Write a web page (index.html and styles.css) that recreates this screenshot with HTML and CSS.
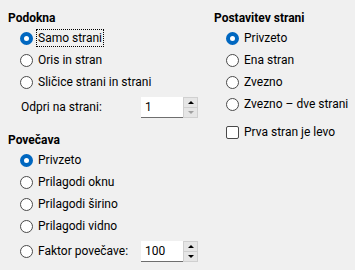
FILE: index.html
```html
<!DOCTYPE html>
<html lang="sl">
<head>
    <meta charset="UTF-8">
    <title>Pogled</title>
    <link rel="stylesheet" href="styles.css">
</head>
<body>
    <div class="options">
        <div class="column left-col">
            <h3>Podokna</h3>
            <div class="row"><span class="radio checked"></span><span class="label focused">Samo strani</span></div>
            <div class="row"><span class="radio"></span><span class="label">Oris in stran</span></div>
            <div class="row"><span class="radio"></span><span class="label">Sličice strani in strani</span></div>
            <div class="row field-row">
                <span class="field-label">Odpri na strani:</span>
                <div class="spin">
                    <span class="spin-value">1</span>
                    <div class="spin-buttons">
                        <span class="spin-btn up"></span>
                        <span class="spin-btn down disabled"></span>
                    </div>
                </div>
            </div>

            <h3 class="section-gap">Povečava</h3>
            <div class="row"><span class="radio checked"></span><span class="label">Privzeto</span></div>
            <div class="row"><span class="radio"></span><span class="label">Prilagodi oknu</span></div>
            <div class="row"><span class="radio"></span><span class="label">Prilagodi širino</span></div>
            <div class="row"><span class="radio"></span><span class="label">Prilagodi vidno</span></div>
            <div class="row field-row">
                <span class="radio"></span><span class="label factor-label">Faktor povečave:</span>
                <div class="spin">
                    <span class="spin-value">100</span>
                    <div class="spin-buttons">
                        <span class="spin-btn up"></span>
                        <span class="spin-btn down"></span>
                    </div>
                </div>
            </div>
        </div>

        <div class="column right-col">
            <h3>Postavitev strani</h3>
            <div class="row"><span class="radio checked"></span><span class="label">Privzeto</span></div>
            <div class="row"><span class="radio"></span><span class="label">Ena stran</span></div>
            <div class="row"><span class="radio"></span><span class="label">Zvezno</span></div>
            <div class="row"><span class="radio"></span><span class="label">Zvezno – dve strani</span></div>
            <div class="row check-row"><span class="checkbox"></span><span class="label">Prva stran je levo</span></div>
        </div>
    </div>
</body>
</html>
```

FILE: styles.css
```css
body {
    margin: 0;
    background-color: #f0f0f0;
    color: #000;
    font-family: Roboto, "Noto Sans", sans-serif;
    font-size: 12px;
}
.options {
    display: flex;
    padding: 8px 0 0 8px;
}
.left-col {
    width: 206px;
}
.column h3 {
    margin: 0;
    padding-top: 1px;
    font-size: 12px;
    font-weight: bold;
    line-height: 18px;
}
.column h3.section-gap {
    margin-top: 12px;
    margin-bottom: 0;
}
.row {
    display: flex;
    align-items: center;
    height: 22px;
    padding-left: 12px;
}
.radio {
    width: 11px;
    height: 11px;
    border: 1px solid #4a4a4a;
    border-radius: 50%;
    background: #fff;
    flex-shrink: 0;
    box-sizing: content-box;
}
.radio.checked {
    width: 5px;
    height: 5px;
    border: 4px solid #0067c0;
}
.checkbox {
    width: 11px;
    height: 11px;
    border: 1px solid #4a4a4a;
    border-radius: 2px;
    background: #fff;
    flex-shrink: 0;
}
.label {
    margin-left: 3px;
    line-height: 16px;
    padding: 0 1px;
    border: 1px solid transparent;
    white-space: nowrap;
}
.label.focused {
    border: 1px dotted #000;
}
.field-row {
    margin-top: 3px;
}
.field-label {
    margin-left: 1px;
    width: 120px;
}
.factor-label {
    box-sizing: border-box;
    width: 105px;
}
.spin {
    display: flex;
    height: 21px;
    width: 57px;
}
.spin-value {
    flex: 1;
    background: #fff;
    border-bottom: 1px solid #6e6e6e;
    line-height: 20px;
    padding-left: 4px;
}
.spin-buttons {
    display: flex;
    flex-direction: column;
    width: 13px;
    border: 1px solid #d0d0d0;
    background: #e6e6e6;
}
.spin-btn {
    flex: 1;
    display: flex;
    align-items: center;
    justify-content: center;
}
.spin-btn.up {
    border-bottom: 1px solid #d0d0d0;
}
.spin-btn::before {
    content: "";
    border-left: 3px solid transparent;
    border-right: 3px solid transparent;
}
.spin-btn.up::before {
    border-bottom: 3px solid #000;
}
.spin-btn.down::before {
    border-top: 3px solid #000;
}
.spin-btn.disabled::before {
    border-top-color: #a0a0a0;
}
.check-row {
    margin-top: 6px;
}
```
